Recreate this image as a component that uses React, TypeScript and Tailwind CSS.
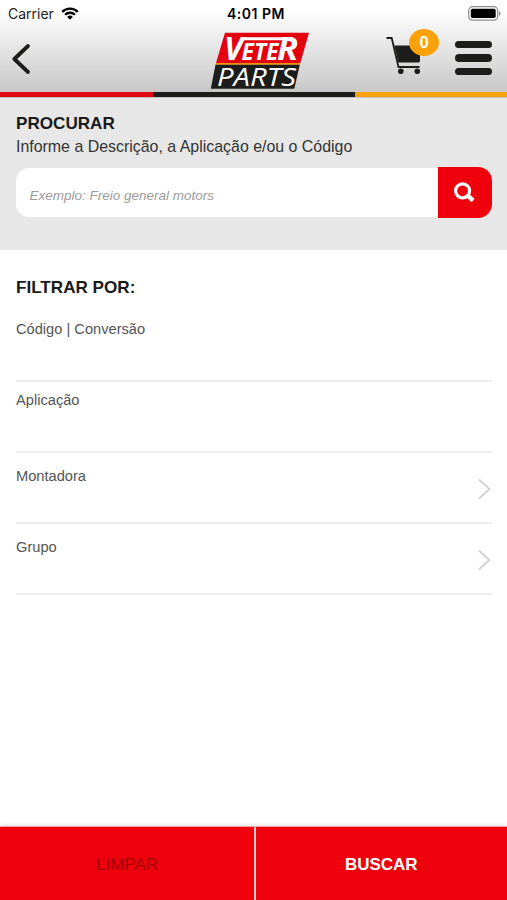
import React from 'react';

interface FilterField {
    label: string;
    hasOptions: boolean;
    spacing: string;
}

const filterFields: FilterField[] = [
    { label: 'Código | Conversão', hasOptions: false, spacing: 'h-[71px] pt-[8px]' },
    { label: 'Aplicação', hasOptions: false, spacing: 'h-[71px] pt-[8px]' },
    { label: 'Montadora', hasOptions: true, spacing: 'h-[71px] pt-[13px]' },
    { label: 'Grupo', hasOptions: true, spacing: 'h-[71px] pt-[13px]' },
];

const StatusBar: React.FC = () => (
    <div className="flex h-[27px] items-center justify-between pl-[8px] pr-[6px] font-[Inter,sans-serif] text-black">
        <div className="flex w-[160px] items-center gap-[7px] text-[14px] leading-none text-[#222]">
            <span>Carrier</span>
            <svg width="18" height="13" viewBox="0 0 18 13" fill="none" stroke="#000" strokeWidth="2.3">
                <path d="M1.2 4.9a11 11 0 0 1 15.6 0" />
                <path d="M4.1 7.8a6.9 6.9 0 0 1 9.8 0" />
                <path d="M9 12.7 6.2 9.9a4 4 0 0 1 5.6 0Z" fill="#000" stroke="none" />
            </svg>
        </div>
        <span className="whitespace-nowrap text-[14px] font-semibold leading-none tracking-[0.5px]">4:01 PM</span>
        <div className="flex w-[157px] justify-end">
            <svg width="33" height="15" viewBox="0 0 33 15">
                <rect x="0.7" y="0.7" width="29" height="13.4" rx="3.8" fill="#fff" stroke="#8c8c8c" strokeWidth="1.2" />
                <rect x="2.8" y="2.7" width="24.9" height="9.4" rx="1.8" fill="#000" />
                <path d="M31 5.2c2 .8 2 3.8 0 4.6Z" fill="#8c8c8c" />
            </svg>
        </div>
    </div>
);

const Logo: React.FC = () => (
    <svg className="overflow-visible" width="100" height="58" viewBox="0 0 100 58" fontFamily="'Open Sans', 'Noto Sans', sans-serif" fontStyle="italic">
        <path d="M15 .8H99L90.3 31H6Z" fill="#e3000f" />
        <path d="M6 31H90.3L89.8 32.7H5.5Z" fill="#f39200" />
        <path d="M5.5 32.7H89.8L84.3 56.8H.8Z" fill="#1d1d1b" />
        <g fontWeight="700" fill="#fff">
            <text x="14" y="28" fontSize="32" textLength="19" lengthAdjust="spacingAndGlyphs">V</text>
            <text x="31.5" y="28" fontSize="23.5" textLength="37" lengthAdjust="spacingAndGlyphs">ETE</text>
            <text x="67" y="28" fontSize="32" textLength="21" lengthAdjust="spacingAndGlyphs">R</text>
        </g>
        {/* bar joining the V to the R */}
        <path d="M32 5.2H82V8.3H31Z" fill="#fff" />
        <text x="7" y="54.2" fontSize="25.5" fill="#fff" textLength="79" lengthAdjust="spacingAndGlyphs">PARTS</text>
    </svg>
);

const CartButton: React.FC = () => (
    <button className="relative h-[46px] w-[53px]" aria-label="Carrinho">
        <svg width="53" height="46" viewBox="0 0 53 46">
            <path d="M.5 9h5.2L12.5 38H33.5" fill="none" stroke="#1d1d1b" strokeWidth="1.8" />
            <path d="M8.3 16.5H34V31.8c0 1-.6 1.6-1.6 1.6H12.3Z" fill="#1d1d1b" />
            <circle cx="14.8" cy="42.3" r="2.8" fill="#1d1d1b" />
            <circle cx="31.3" cy="42.3" r="2.8" fill="#1d1d1b" />
        </svg>
        <span className="absolute right-0 top-0 flex h-[27px] w-[30px] items-center justify-center rounded-[50%] bg-[#fba20a] pt-px font-[Roboto,sans-serif] text-[16px] font-bold text-white">0</span>
    </button>
);

const Header: React.FC = () => (
    <header className="h-[98px] bg-linear-to-b from-white from-10% to-[#c4c4c4]">
        <StatusBar />
        <div className="flex h-[65px] items-start pt-px">
            <button className="ml-[11px] mt-[15px]" aria-label="Voltar">
                <svg width="20" height="32" viewBox="0 0 20 32" fill="none" stroke="#1d1d1b" strokeWidth="3.8" strokeLinecap="round" strokeLinejoin="round">
                    <path d="M17 3 3.3 16 17 29" />
                </svg>
            </button>
            <div className="ml-[179px] mt-1">
                <Logo />
            </div>
            <div className="ml-auto mr-[15px] flex gap-4 pt-px">
                <CartButton />
                <button className="mt-[11.5px] flex w-[37px] flex-col gap-[6px]" aria-label="Menu">
                    <span className="h-[7.5px] rounded-full bg-[#1d1d1b]" />
                    <span className="h-[7.5px] rounded-full bg-[#1d1d1b]" />
                    <span className="h-[7.5px] rounded-full bg-[#1d1d1b]" />
                </button>
            </div>
        </div>
        <div className="flex h-[5px]">
            <div className="w-[153px] bg-[#e30613]" />
            <div className="w-[202px] bg-[#1d1d1b]" />
            <div className="flex-1 bg-[#fba20a]" />
        </div>
    </header>
);

const SearchPanel: React.FC = () => (
    <section className="h-[152px] bg-[#e7e7e7] pl-4 pt-[15px]">
        <h1 className="text-[17.1px] font-bold leading-[22px] text-[#1a1a1a]">PROCURAR</h1>
        <p className="pt-px text-[15.93px] leading-[22px] text-[#333]">Informe a Descrição, a Aplicação e/ou o Código</p>
        <div className="mt-[9px] flex h-[51px] items-center">
            <input
                className="h-[49px] w-[422px] rounded-l-[13px] bg-white pl-[13.5px] pt-[5px] text-[13.5px] italic outline-none placeholder:text-[#9b9b9b]"
                placeholder="Exemplo: Freio general motors"
            />
            <button className="flex h-[51px] w-[54px] shrink-0 items-center justify-center rounded-r-[14px] bg-[#ee000c]" aria-label="Procurar">
                <svg width="22" height="22" viewBox="0 0 22 22" fill="none" stroke="#fff">
                    <circle cx="8.6" cy="8.8" r="7" strokeWidth="3.2" />
                    <path d="m13.4 13.3 5.7 5.2" strokeWidth="4.4" />
                </svg>
            </button>
        </div>
    </section>
);

const FilterRow: React.FC<{ field: FilterField }> = ({ field }) => (
    <li className={`flex justify-between border-b-2 border-[#ededed] ${field.spacing}`}>
        <span className="text-[14.65px] leading-5 text-[#555]">{field.label}</span>
        {field.hasOptions && (
            <svg className="mt-3" width="16" height="22" viewBox="0 0 16 22" fill="none" stroke="#d2d2d2" strokeWidth="1.8">
                <path d="M3 1.5 13.5 11 3 20.5" />
            </svg>
        )}
    </li>
);

export default function App() {
    return (
        <div className="flex h-screen w-full flex-col overflow-hidden bg-white font-['Liberation_Sans',Arial,sans-serif]">
            <Header />
            <SearchPanel />
            <main className="flex-1 pl-4 pr-[15px] pt-[27px]">
                <h2 className="text-[17.1px] font-bold leading-[22px] text-[#1a1a1a]">FILTRAR POR:</h2>
                <ul className="mt-[12px]">
                    {filterFields.map(field => (
                        <FilterRow key={field.label} field={field} />
                    ))}
                </ul>
            </main>
            <footer className="flex h-[74px] gap-[1.5px] border-t border-[#f0a0a0] bg-[#f3c4c4] text-[17px] shadow-[0_-1px_4px_rgba(0,0,0,0.12)]">
                <button className="w-[254px] bg-[#ee000c] pt-[3px] text-[#a80008]">LIMPAR</button>
                <button className="flex-1 bg-[#ee000c] pt-[3px] font-bold text-white">BUSCAR</button>
            </footer>
        </div>
    );
}
